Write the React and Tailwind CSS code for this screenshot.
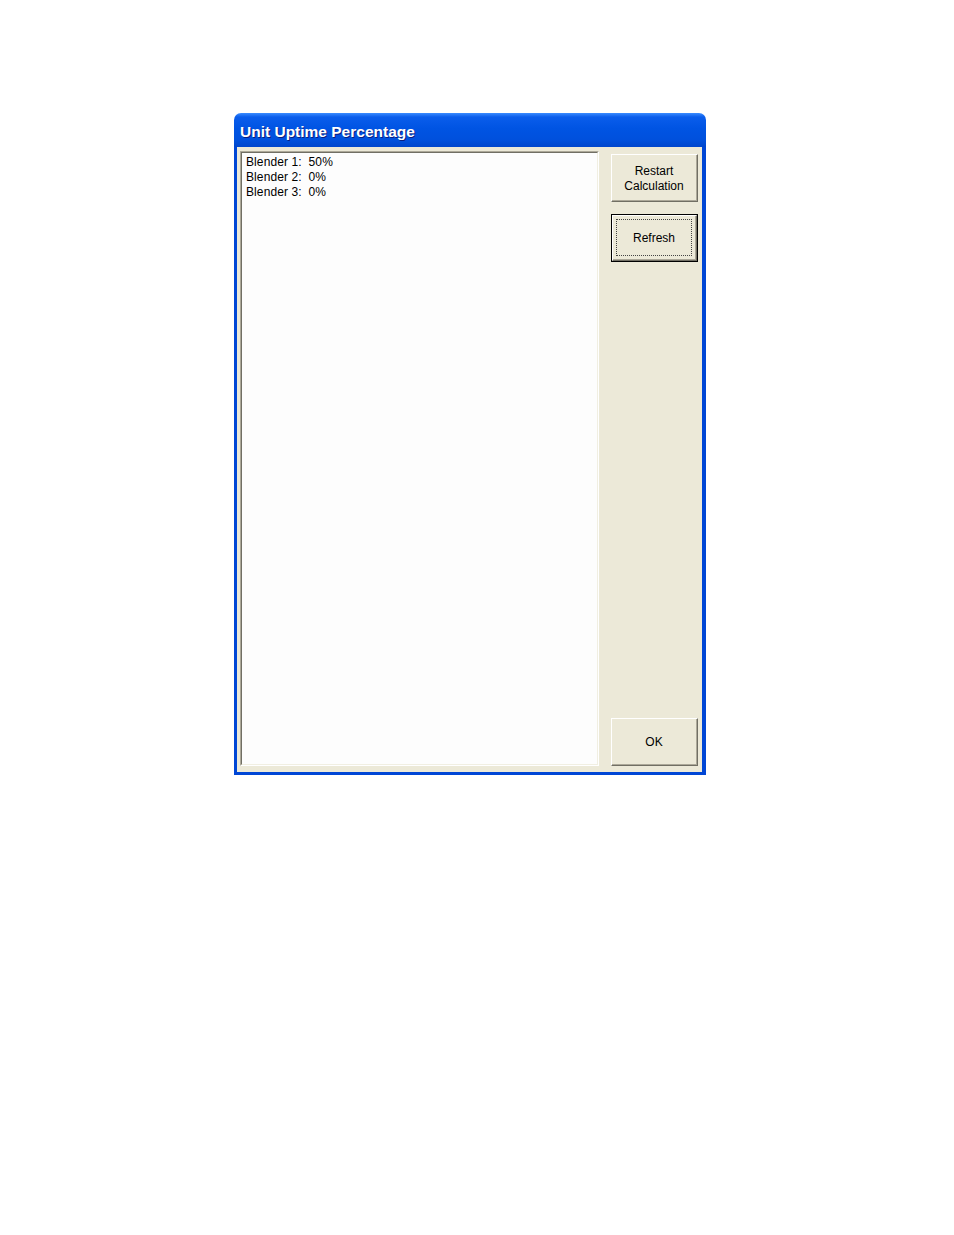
const lineas = [
  ["Blender 1:", "50%"],
  ["Blender 2:", "0%"],
  ["Blender 3:", "0%"],
];

function Boton({ children, predeterminado = false }) {
  // Botón clásico con borde 3D; el predeterminado lleva marco negro y foco punteado.
  const cara = (
    <div className="flex h-full w-full flex-col border-t border-l border-t-white border-l-white border-r border-b border-r-[#716F64] border-b-[#716F64]">
      <div className="flex h-full w-full flex-col border-r border-b border-r-[#ACA899] border-b-[#ACA899] bg-[#ECE9D8]">
        {predeterminado ? (
          <div className="m-[3px] flex flex-1 items-center justify-center border border-dotted border-[#444] pt-[2px]">
            {children}
          </div>
        ) : (
          <div className="flex flex-1 items-center justify-center pt-[2px]">{children}</div>
        )}
      </div>
    </div>
  );

  return (
    <button
      type="button"
      className={
        predeterminado
          ? "h-[48px] w-[87px] border border-black text-center text-[12px] leading-[15px] text-black"
          : "h-[48px] w-[87px] text-center text-[12px] leading-[15px] text-black"
      }
    >
      {cara}
    </button>
  );
}

export default function App() {
  return (
    <div className="min-h-[1235px] bg-white pl-[234px] pt-[113px] font-['Liberation_Sans',Arial,sans-serif]">
      <div className="flex h-[662px] w-[472px] flex-col">
        {/* Barra de título */}
        <div className="flex h-[34px] items-center rounded-t-[7px] bg-[linear-gradient(to_bottom,#3A8CFF_0%,#0A5DEB_12%,#0054E3_45%,#0050DC_80%,#0046CC_100%)] pl-[6px] pt-[3px]">
          <span className="text-[15.5px] font-bold text-white [text-shadow:1px_1px_0_#0A1E80]">
            Unit Uptime Percentage
          </span>
        </div>

        {/* Cuerpo de la ventana */}
        <div className="flex flex-1 border-l-[3px] border-r-[4px] border-b-[3px] border-[#0046D5] bg-[#ECE9D8] pl-[3px] pr-[4px] pt-[4px] pb-[6px]">
          <div className="h-full w-[360px] border-t border-l border-t-[#ACA899] border-l-[#ACA899] border-r border-b border-r-white border-b-white">
            <div className="h-full w-full border-t border-l border-t-[#716F64] border-l-[#716F64] border-r border-b border-r-[#F1EFE2] border-b-[#F1EFE2] bg-[#FDFDFD] pl-[4px] pt-[2px]">
              {lineas.map(([nombre, valor]) => (
                <p key={nombre} className="whitespace-pre text-[12px] leading-[15px] tracking-[0.1px] text-black">
                  {nombre}  {valor}
                </p>
              ))}
            </div>
          </div>

          <div className="ml-[12px] flex flex-col pt-[3px]">
            <Boton>
              Restart
              <br />
              Calculation
            </Boton>
            <div className="mt-[12px]">
              <Boton predeterminado>Refresh</Boton>
            </div>
            <div className="mt-auto">
              <Boton>OK</Boton>
            </div>
          </div>
        </div>
      </div>
    </div>
  );
}
